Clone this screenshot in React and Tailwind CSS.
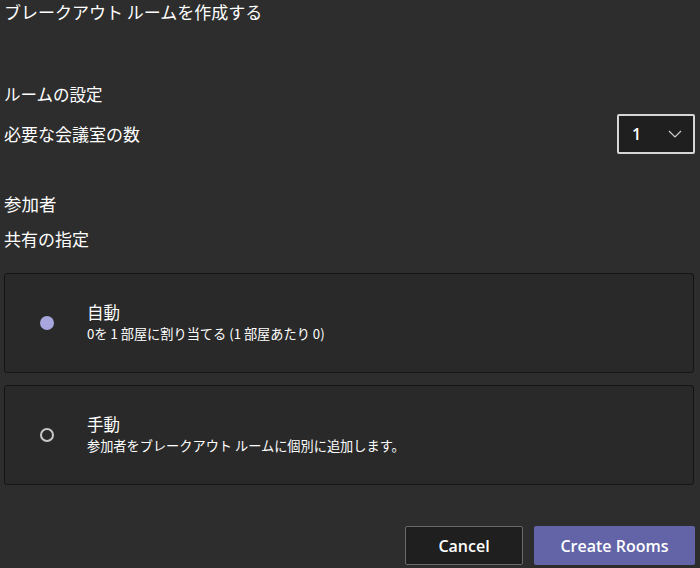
import React from "react";

const jp = { fontFamily: '"Noto Sans CJK JP", "Noto Sans", sans-serif' };

const OptionCard = ({ title, desc, selected }) => (
  <div className="mx-[4px] h-[100px] rounded-[3px] border border-[#141414] bg-[#292929] flex items-center">
    <div className="w-[82px] flex justify-center pl-[2px]">
      {selected ? (
        <div className="w-[14px] h-[14px] rounded-full bg-[#a7a7dd]" />
      ) : (
        <div className="w-[14px] h-[14px] rounded-full border-2 border-[#c8c8c8]" />
      )}
    </div>
    <div className="flex flex-col">
      <div className="text-[16.5px] leading-[22px]">{title}</div>
      <div className="text-[13.2px] leading-[22px]">{desc}</div>
    </div>
  </div>
);

export default function App() {
  return (
    <div className="w-[700px] h-[568px] bg-[#2d2d2d] text-white overflow-hidden" style={jp}>
      <div className="pl-[4px] text-[17px] leading-[24px]">ブレークアウト ルームを作成する</div>

      <div className="pl-[4px] mt-[58px] text-[16.5px] leading-[24px]">ルームの設定</div>

      <div className="flex items-center justify-between pl-[4px] pr-[5px] mt-[8px]">
        <div className="text-[17px] leading-[24px]">必要な会議室の数</div>
        <div className="w-[78px] h-[40px] border-2 border-[#d6d6d6] rounded-[2px] bg-[#1f1f1f] flex items-center justify-between pl-[13px] pr-[11px]">
          <span className="text-[16px] font-semibold" style={{ fontFamily: '"Open Sans", sans-serif' }}>1</span>
          <svg width="14" height="8" viewBox="0 0 14 8" fill="none">
            <path d="M1 1l6 6 6-6" stroke="#cfcfcf" strokeWidth="1.2" />
          </svg>
        </div>
      </div>

      <div className="pl-[4px] mt-[38px] text-[17.5px] leading-[24px]">参加者</div>
      <div className="pl-[4px] mt-[11px] text-[17px] leading-[24px]">共有の指定</div>

      <div className="mt-[22px] flex flex-col gap-[12px] pr-[2px]">
        <OptionCard selected title="自動" desc="0を 1 部屋に割り当てる (1 部屋あたり 0)" />
        <OptionCard title="手動" desc="参加者をブレークアウト ルームに個別に追加します。" />
      </div>

      <div className="flex justify-end gap-[11px] pr-[5px] mt-[41px]" style={{ fontFamily: '"Open Sans", sans-serif' }}>
        <button className="w-[118px] h-[39px] border border-[#6a6a6a] rounded-[2px] bg-[#1f1f1f] text-[16px] font-semibold">
          Cancel
        </button>
        <button className="w-[161px] h-[39px] rounded-[2px] bg-[#6264a7] text-[16px] font-semibold">
          Create Rooms
        </button>
      </div>
    </div>
  );
}
